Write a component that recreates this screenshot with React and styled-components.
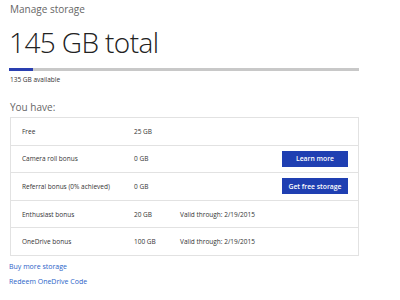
import styled, { createGlobalStyle } from "styled-components"

const GlobalStyle = createGlobalStyle`
  body {
    margin: 0;
    background: #fff;
    font-family: "Open Sans", "Liberation Sans", sans-serif;
    color: #333;
  }
`

const rows = [
    { label: "Free", amount: "25 GB" },
    { label: "Camera roll bonus", amount: "0 GB", action: "Learn more" },
    { label: "Referral bonus (0% achieved)", amount: "0 GB", action: "Get free storage" },
    { label: "Enthusiast bonus", amount: "20 GB", valid: "Valid through: 2/19/2015" },
    { label: "OneDrive bonus", amount: "100 GB", valid: "Valid through: 2/19/2015" },
]

const links = ["Buy more storage", "Redeem OneDrive Code"]

export default function App() {
    return (
        <Page>
            <GlobalStyle />
            <Heading>Manage storage</Heading>
            <Total>145 GB total</Total>
            <Bar>
                <Fill style={{ width: `${(10 / 145) * 100}%` }} />
            </Bar>
            <Available>135 GB available</Available>
            <SubHeading>You have:</SubHeading>
            <Table>
                {rows.map((row) => (
                    <Row key={row.label}>
                        <Label>{row.label}</Label>
                        <Amount>{row.amount}</Amount>
                        <Valid>{row.valid}</Valid>
                        {row.action && <Button>{row.action}</Button>}
                    </Row>
                ))}
            </Table>
            <Links>
                {links.map((text) => (
                    <Link key={text}>{text}</Link>
                ))}
            </Links>
        </Page>
    )
}

const Page = styled.div`
    width: 350px;
    padding: 2px 0 0 9px;
`

const Heading = styled.div`
    font-size: 10px;
    line-height: 14px;
    color: #666;
    padding-left: 1px;
`

const Total = styled.div`
    font-size: 28px;
    font-weight: 300;
    line-height: 36px;
    margin-top: 7.5px;
    color: #222;
    letter-spacing: -0.6px;
`

const Bar = styled.div`
    height: 3px;
    background: #c8c8c8;
    margin-top: 8.5px;
`

const Fill = styled.div`
    height: 100%;
    background: #2a3fb0;
`

const Available = styled.div`
    font-size: 6.5px;
    line-height: 10px;
    margin-top: 4px;
    padding-left: 1px;
    color: #333;
`

const SubHeading = styled.div`
    font-size: 10px;
    line-height: 14px;
    color: #666;
    margin-top: 15px;
    padding-left: 1px;
`

const Table = styled.div`
    margin-top: 3px;
    margin-left: 1px;
    border: 1px solid #e2e2e2;
    border-bottom: none;
`

const Row = styled.div`
    display: grid;
    grid-template-columns: 112px 46px 1fr auto;
    align-items: center;
    height: 27.6px;
    box-sizing: border-box;
    padding: 0 10px 0 11px;
    border-bottom: 1px solid #e2e2e2;
    font-size: 6.5px;
    color: #333;
`

const Label = styled.span``

const Amount = styled.span``

const Valid = styled.span``

const Button = styled.button`
    width: 66px;
    height: 16px;
    border: none;
    padding: 0;
    background: #1f3fb2;
    color: #fff;
    font-family: "Open Sans", "Liberation Sans", sans-serif;
    font-size: 6.8px;
    font-weight: 600;
`

const Links = styled.div`
    display: flex;
    flex-direction: column;
    gap: 5px;
    margin-top: 6px;
`

const Link = styled.a`
    font-size: 7px;
    line-height: 10px;
    color: #2b63c8;
    cursor: pointer;
`
